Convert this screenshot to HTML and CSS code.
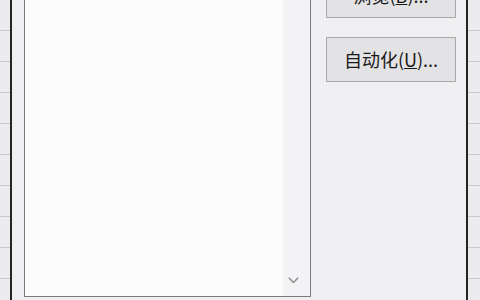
FILE: index.html
```html
<!DOCTYPE html>
<html lang="zh-CN">
<head>
    <meta charset="UTF-8">
    <meta name="viewport" content="width=device-width, initial-scale=1.0">
    <title>自动化</title>
    <link rel="stylesheet" href="styles.css">
</head>
<body>
    <div class="window">
        <div class="side side-left"></div>

        <div class="dialog">
            <div class="listbox">
                <div class="list-items"></div>
                <div class="scrollbar">
                    <svg class="arrow" width="11" height="7" viewBox="0 0 11 7">
                        <path d="M0.8 0.8 L5.5 5.6 L10.2 0.8" fill="none" stroke="#8a8a8a" stroke-width="1.4"/>
                    </svg>
                </div>
            </div>

            <div class="actions">
                <button type="button" class="btn btn-browse">浏览(<u>B</u>)...</button>
                <button type="button" class="btn">自动化(<u>U</u>)...</button>
            </div>
        </div>

        <div class="side side-right"></div>
    </div>
</body>
</html>
```

FILE: styles.css
```css
body {
    margin: 0;
    height: 300px;
    overflow: hidden;
    font-family: "Noto Sans CJK SC", "Noto Sans", sans-serif;
    color: #1a1a1a;
}

.window {
    display: flex;
    height: 300px;
}

.side {
    background-color: #ececef;
    background-image: repeating-linear-gradient(to bottom, transparent 0 30px, #c9c9cc 30px 31px);
}

.side-left {
    width: 10px;
}

.side-right {
    width: 12px;
}

.dialog {
    flex: 1;
    display: flex;
    align-items: flex-start;
    background: #f0eff1;
    border-left: 2px solid #252525;
    border-right: 2px solid #252525;
    padding-left: 12px;
}

.listbox {
    display: flex;
    width: 285px;
    height: 296px;
    background: #fdfcfd;
    border: 1px solid #7c7c7c;
    border-top: none;
}

.list-items {
    flex: 1;
}

.scrollbar {
    width: 27px;
    background: #f3f2f4;
    display: flex;
    flex-direction: column;
    justify-content: flex-end;
    padding-left: 5px;
    padding-bottom: 12px;
    box-sizing: border-box;
}

.actions {
    display: flex;
    flex-direction: column;
    gap: 19px;
    margin-left: 15px;
    width: 130px;
}

.btn {
    height: 45px;
    background: #e3e2e4;
    border: 1px solid #a8a8a8;
    border-radius: 0;
    font-family: inherit;
    font-size: 18px;
    color: #1a1a1a;
    padding: 0 0 2px;
}

.btn u {
    text-decoration-thickness: 1px;
    text-underline-offset: 1px;
}

.btn-browse {
    margin-top: -27px;
}
```
